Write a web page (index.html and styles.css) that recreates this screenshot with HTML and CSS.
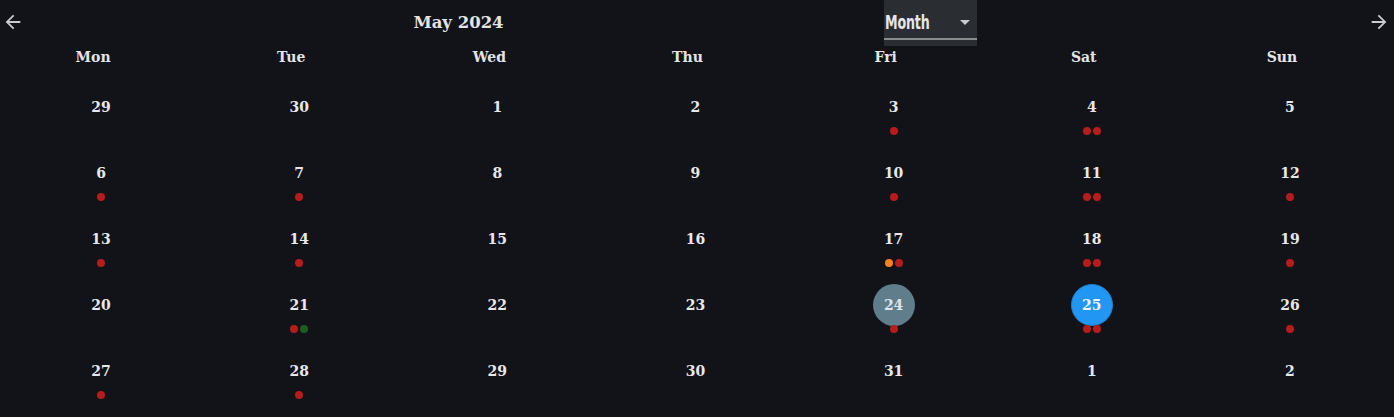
FILE: index.html
```html
<!DOCTYPE html>
<html lang="en">
<head>
<meta charset="utf-8">
<title>Calendar</title>
<link rel="stylesheet" href="styles.css">
</head>
<body>
<div class="cal">
  <header class="bar">
    <button class="nav" aria-label="Previous">
      <svg viewBox="0 0 24 24" width="22" height="22"><path d="M20 11H7.83l5.59-5.59L12 4l-8 8 8 8 1.41-1.41L7.83 13H20v-2z" fill="currentColor"/></svg>
    </button>
    <div class="center">
      <h1 class="title">May 2024</h1>
      <div class="select">
        <span class="select-label">Month</span>
        <span class="caret"></span>
      </div>
    </div>
    <button class="nav" aria-label="Next">
      <svg viewBox="0 0 24 24" width="22" height="22"><path d="M12 4l-1.41 1.41L16.170 11H4v2h12.17l-5.58 5.59L12 20l8-8z" fill="currentColor"/></svg>
    </button>
  </header>
  <div class="grid">
    <div class="dow">Mon</div><div class="dow">Tue</div><div class="dow">Wed</div><div class="dow">Thu</div><div class="dow">Fri</div><div class="dow">Sat</div><div class="dow">Sun</div>

    <div class="day"><span class="num">29</span><span class="dots"></span></div>
    <div class="day"><span class="num">30</span><span class="dots"></span></div>
    <div class="day"><span class="num">1</span><span class="dots"></span></div>
    <div class="day"><span class="num">2</span><span class="dots"></span></div>
    <div class="day"><span class="num">3</span><span class="dots"><i class="dot red"></i></span></div>
    <div class="day"><span class="num">4</span><span class="dots"><i class="dot red"></i><i class="dot red"></i></span></div>
    <div class="day"><span class="num">5</span><span class="dots"></span></div>

    <div class="day"><span class="num">6</span><span class="dots"><i class="dot red"></i></span></div>
    <div class="day"><span class="num">7</span><span class="dots"><i class="dot red"></i></span></div>
    <div class="day"><span class="num">8</span><span class="dots"></span></div>
    <div class="day"><span class="num">9</span><span class="dots"></span></div>
    <div class="day"><span class="num">10</span><span class="dots"><i class="dot red"></i></span></div>
    <div class="day"><span class="num">11</span><span class="dots"><i class="dot red"></i><i class="dot red"></i></span></div>
    <div class="day"><span class="num">12</span><span class="dots"><i class="dot red"></i></span></div>

    <div class="day"><span class="num">13</span><span class="dots"><i class="dot red"></i></span></div>
    <div class="day"><span class="num">14</span><span class="dots"><i class="dot red"></i></span></div>
    <div class="day"><span class="num">15</span><span class="dots"></span></div>
    <div class="day"><span class="num">16</span><span class="dots"></span></div>
    <div class="day"><span class="num">17</span><span class="dots"><i class="dot orange"></i><i class="dot red"></i></span></div>
    <div class="day"><span class="num">18</span><span class="dots"><i class="dot red"></i><i class="dot red"></i></span></div>
    <div class="day"><span class="num">19</span><span class="dots"><i class="dot red"></i></span></div>

    <div class="day"><span class="num">20</span><span class="dots"></span></div>
    <div class="day"><span class="num">21</span><span class="dots"><i class="dot red"></i><i class="dot green"></i></span></div>
    <div class="day"><span class="num">22</span><span class="dots"></span></div>
    <div class="day"><span class="num">23</span><span class="dots"></span></div>
    <div class="day"><span class="num selected">24</span><span class="dots"><i class="dot red"></i></span></div>
    <div class="day"><span class="num today">25</span><span class="dots"><i class="dot red"></i><i class="dot red"></i></span></div>
    <div class="day"><span class="num">26</span><span class="dots"><i class="dot red"></i></span></div>

    <div class="day"><span class="num">27</span><span class="dots"><i class="dot red"></i></span></div>
    <div class="day"><span class="num">28</span><span class="dots"><i class="dot red"></i></span></div>
    <div class="day"><span class="num">29</span><span class="dots"></span></div>
    <div class="day"><span class="num">30</span><span class="dots"></span></div>
    <div class="day"><span class="num">31</span><span class="dots"></span></div>
    <div class="day"><span class="num">1</span><span class="dots"></span></div>
    <div class="day"><span class="num">2</span><span class="dots"></span></div>
  </div>
</div>
</body>
</html>
```
FILE: styles.css
```css
* { box-sizing: border-box; }
html, body {
  margin: 0;
  padding: 0;
  background: #111318;
  color: #e8e8ea;
  font-family: "DejaVu Serif", "Liberation Serif", serif;
  height: 417px;
  overflow: hidden;
}
.cal { width: 1394px; }
.bar {
  height: 46px;
  display: flex;
  align-items: center;
  justify-content: space-between;
}
.nav {
  background: none;
  border: none;
  color: #c9cbcf;
  padding: 0;
  width: 22px;
  height: 22px;
  display: flex;
  margin: 0 4px 2px 2px;
  cursor: pointer;
}
.nav:last-child { margin: 0 4px 2px 4px; }
.center {
  display: flex;
  align-items: stretch;
  height: 46px;
  margin-right: 2px;
}
.title {
  margin: 0;
  font-size: 16.5px;
  font-weight: bold;
  line-height: 46px;
  color: #e4e4e6;
  padding-bottom: 1px;
}
.select {
  margin-left: 380px;
  width: 93px;
  height: 46px;
  background: #2a2d31;
  display: flex;
  align-items: center;
  justify-content: space-between;
  padding: 0 7px 2px 1px;
  position: relative;
}
.select::after {
  content: "";
  position: absolute;
  left: 0; right: 0;
  top: 38px;
  height: 2px;
  background: #8a8b8d;
}
.select-label {
  font-family: "Liberation Sans Narrow", "DejaVu Sans Condensed", "DejaVu Sans", sans-serif;
  font-stretch: condensed;
  font-weight: bold;
  font-size: 19px;
  color: #e6e6e8;
  display: inline-block;
  transform: scaleX(0.74);
  transform-origin: left center;
  letter-spacing: -0.2px;
}
.caret {
  width: 0; height: 0;
  border-left: 5px solid transparent;
  border-right: 5px solid transparent;
  border-top: 5px solid #c8c9cb;
  margin-top: 1px;
}
.grid {
  display: grid;
  grid-template-columns: repeat(7, 1fr);
  padding: 0 5px 0 2px;
}
.dow {
  height: 28px;
  text-align: center;
  font-size: 14px;
  font-weight: bold;
  line-height: 20px;
  padding: 1px 16px 0 0;
  color: #e4e4e6;
}
.day {
  height: 66px;
  display: flex;
  flex-direction: column;
  align-items: center;
  padding-top: 12px;
}
.num {
  width: 42px;
  height: 42px;
  border-radius: 50%;
  display: flex;
  align-items: center;
  justify-content: center;
  font-size: 14px;
  font-weight: bold;
  color: #e8e8ea;
}
.num.selected { background: #607d8b; color: #dfe4e8; }
.num.today { background: #2196f3; color: #eef5fc; border: 1px solid #1e7fcf; }
.dots {
  display: flex;
  gap: 2px;
  height: 8px;
  margin-top: -1px;
}
.dot {
  width: 8px;
  height: 8px;
  border-radius: 50%;
  display: block;
}
.red { background: #b71c1c; }
.orange { background: #f5821f; }
.green { background: #1b5e20; }
```
